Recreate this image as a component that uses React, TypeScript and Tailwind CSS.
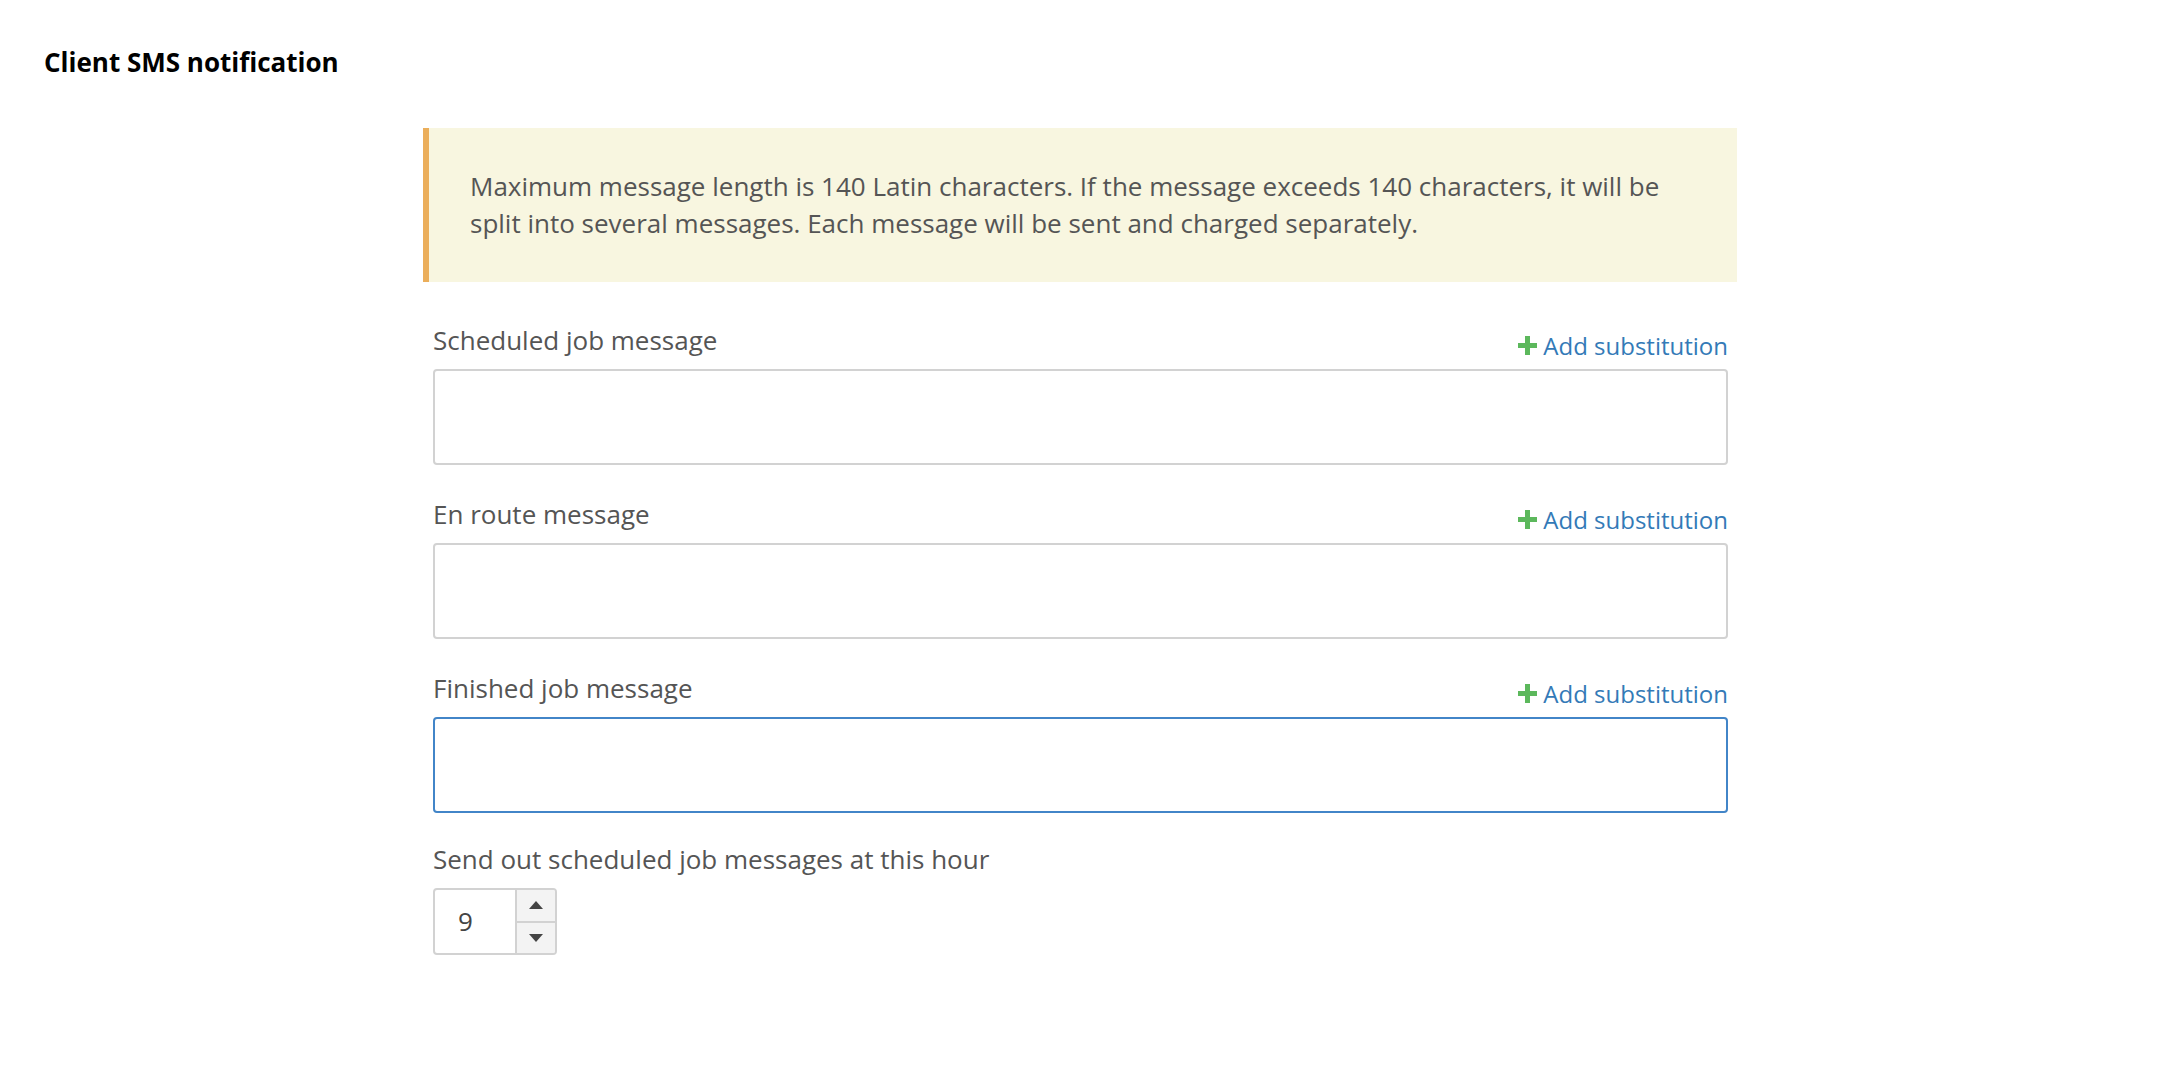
const PlusIcon = () => (
  <svg width="19" height="19" viewBox="0 0 19 19" className="shrink-0">
    <rect x="7" y="0" width="5" height="19" fill="#5cb85c" />
    <rect x="0" y="7" width="19" height="5" fill="#5cb85c" />
  </svg>
);

type FieldProps = {
  label: string;
  focused?: boolean;
  spacing: string;
};

const MessageField = ({ label, focused, spacing }: FieldProps) => (
  <div className={spacing}>
    <div className="flex items-start justify-between">
      <label className="leading-[37px] text-[#555]">{label}</label>
      <a
        href="#"
        className="mt-[5px] flex items-center gap-[6px] text-[24px] leading-[37px] text-[#337ab7]"
      >
        <PlusIcon />
        Add substitution
      </a>
    </div>
    <textarea
      className={
        "mt-[5px] block h-[96px] w-full resize-none rounded-[4px] border-2 bg-white outline-none " +
        (focused ? "border-[#4285c8]" : "border-[#d2d2d2]")
      }
    />
  </div>
);

export default function App() {
  return (
    <div
      className="min-h-screen w-full bg-white text-[26px]"
      style={{ fontFamily: '"Open Sans", "Noto Sans", sans-serif' }}
    >
      <h1 className="pl-[44px] pt-[44px] text-[26px] font-bold leading-[37px] text-black">
        Client SMS notification
      </h1>

      <div className="ml-[423px] mt-[47px] w-[1314px]">
        <div className="border-l-[6px] border-[#ebae5b] bg-[#f8f6e0] py-[40px] pl-[41px] pr-[36px] leading-[37px] text-[#555]">
          Maximum message length is 140 Latin characters. If the message exceeds 140
          characters, it will be split into several messages. Each message will be sent
          and charged separately.
        </div>

        <div className="pl-[10px] pr-[9px] pt-[40px]">
          <MessageField label="Scheduled job message" spacing="mb-[31px]" />
          <MessageField label="En route message" spacing="mb-[31px]" />
          <MessageField label="Finished job message" focused spacing="mb-[28px]" />

          <div>
            <label className="block leading-[37px] text-[#555]">
              Send out scheduled job messages at this hour
            </label>
            <div className="mt-[10px] flex h-[67px] w-[124px] overflow-hidden rounded-[4px] border-2 border-[#d2d2d2]">
              <div className="flex flex-1 items-center pl-[23px] text-[#444]">9</div>
              <div className="flex w-[40px] flex-col border-l-2 border-[#d2d2d2] bg-[#f3f3f3]">
                <div className="flex flex-1 items-center justify-center border-b-2 border-[#d2d2d2]">
                  <svg width="14" height="8" viewBox="0 0 14 8">
                    <polygon points="7,0 14,8 0,8" fill="#444" />
                  </svg>
                </div>
                <div className="flex flex-1 items-center justify-center">
                  <svg width="14" height="8" viewBox="0 0 14 8">
                    <polygon points="0,0 14,0 7,8" fill="#444" />
                  </svg>
                </div>
              </div>
            </div>
          </div>
        </div>
      </div>
    </div>
  );
}
